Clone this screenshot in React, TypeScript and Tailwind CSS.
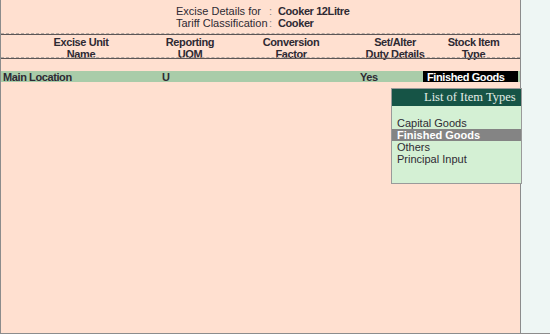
import React from 'react';

const items = ['Capital Goods', 'Finished Goods', 'Others', 'Principal Input'];

function Rule() {
  return (
    <div className="flex flex-col">
      <div className="border-t border-dashed border-[#b7a9a2]" />
      <div className="border-t border-[#5c5656]" />
    </div>
  );
}

export default function App() {
  return (
    <div
      className="relative w-[550px] h-[334px] flex border-l border-b border-[#8c8c8c] bg-[#FFE0D0] text-[11px] leading-[12px] text-[#2e2a33] overflow-hidden"
      style={{ fontFamily: '"Liberation Sans", Arial, sans-serif' }}
    >
      {/* main area */}
      <div className="w-[519px] flex flex-col">
        {/* header */}
        <div className="h-[33px] pt-[5px] pl-[175px]">
          <div className="flex whitespace-nowrap">
            <span className="w-[93px]">Excise Details for</span>
            <span className="w-[9px] text-[#888]">:</span>
            <span className="font-bold tracking-[-0.4px]">Cooker 12Litre</span>
          </div>
          <div className="flex whitespace-nowrap">
            <span className="w-[93px]">Tariff Classification</span>
            <span className="w-[9px] text-[#888]">:</span>
            <span className="font-bold tracking-[-0.4px]">Cooker</span>
          </div>
        </div>
        <Rule />

        {/* column titles */}
        <div className="h-[22px] pt-[1px] flex font-bold text-center tracking-[-0.4px]">
          <div className="w-[160px]">Excise Unit<br />Name</div>
          <div className="w-[58px]">Reporting<br />UOM</div>
          <div className="w-[144px]">Conversion<br />Factor</div>
          <div className="w-[64px]">Set/Alter<br />Duty Details</div>
          <div className="w-[93px]">Stock Item<br />Type</div>
        </div>
        <Rule />

        {/* row */}
        <div className="mt-[12px] h-[11px] flex items-center bg-[#A9CCA9] font-bold tracking-[-0.4px]">
          <div className="w-[161px] pl-[2px]">Main Location</div>
          <div className="w-[198px]">U</div>
          <div className="w-[63px]">Yes</div>
          <div className="w-[95px] h-full bg-black text-white pl-[4px] flex items-center">Finished Goods</div>
        </div>
      </div>

      {/* right panel */}
      <div className="flex-1 border-l border-[#8c8c8c] bg-[#EEF6F4]" />

      {/* popup list */}
      <div className="absolute left-[390px] top-[88px] w-[131px] h-[96px] border border-[#9a9a9a] bg-[#D4F0D4] flex flex-col">
        <div
          className="h-[17px] bg-[#165446] text-[#E4EEE8] text-[12.5px] leading-[17px] pl-[32px] whitespace-nowrap overflow-hidden"
          style={{ fontFamily: '"Liberation Serif", "Times New Roman", serif' }}
        >
          List of Item Types
        </div>
        <div className="pt-[11px] flex flex-col">
          {items.map((it) => (
            <div
              key={it}
              className={
                it === 'Finished Goods'
                  ? 'pl-[5px] bg-[#848484] text-white font-bold'
                  : 'pl-[5px]'
              }
            >
              {it}
            </div>
          ))}
        </div>
      </div>
    </div>
  );
}
